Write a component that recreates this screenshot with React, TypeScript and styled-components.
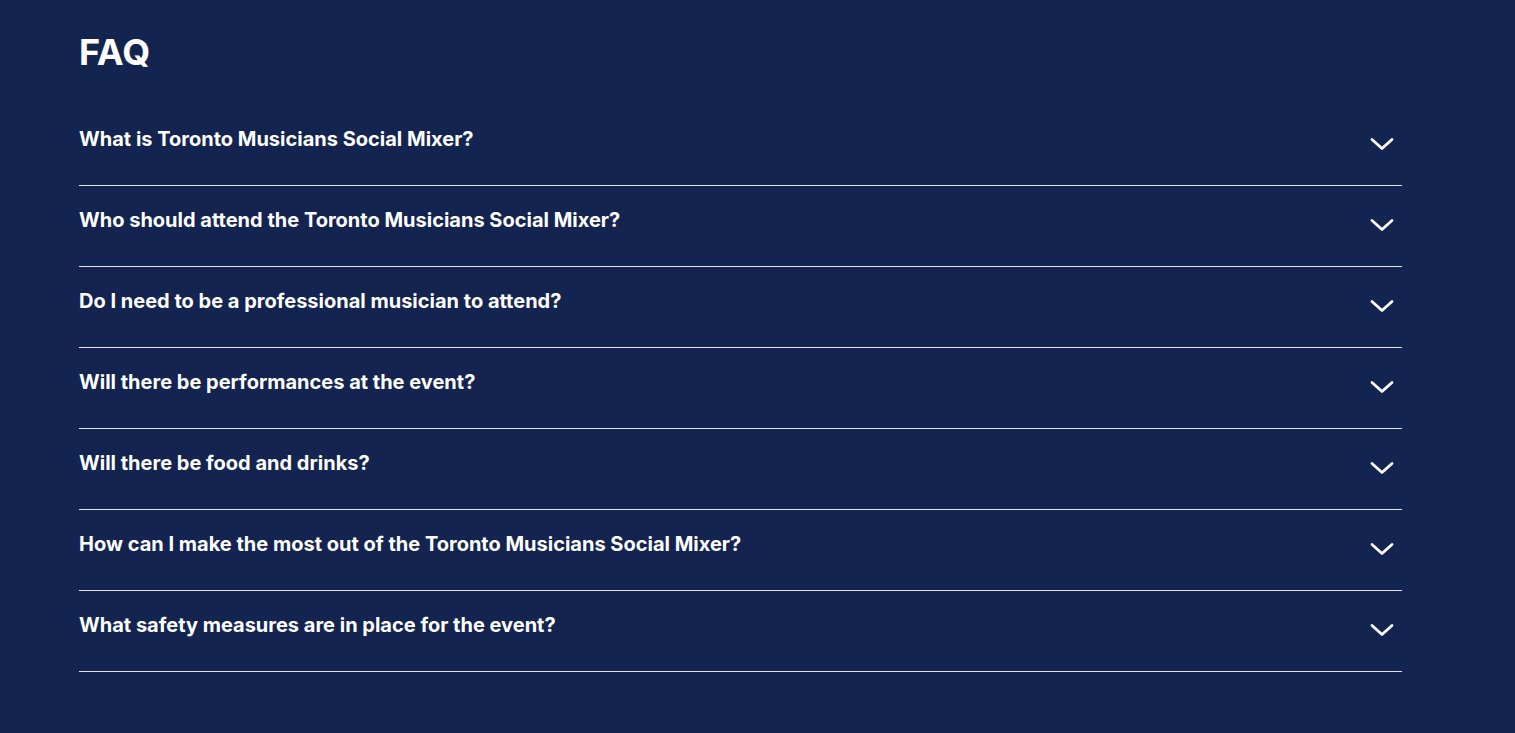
import React from "react";
import styled, { createGlobalStyle } from "styled-components";

const Global = createGlobalStyle`
  html, body { margin: 0; padding: 0; background: #132450; }
  body { font-family: Inter, "Noto Sans", sans-serif; color: #ffffff; }
`;

const Page = styled.main`
  min-height: 733px;
  background: #132450;
  padding: 28px 0 0 79px;
  box-sizing: border-box;
`;

const Section = styled.section`
  width: 1323px;
`;

const Title = styled.h2`
  margin: 0 0 29px;
  font-size: 36px;
  line-height: 48px;
  font-weight: 700;
`;

const List = styled.div`
  display: flex;
  flex-direction: column;
`;

const Row = styled.div`
  height: 81px;
  box-sizing: border-box;
  border-bottom: 1px solid rgba(255, 255, 255, 0.88);
  display: flex;
  align-items: flex-start;
  justify-content: space-between;
  padding: 24px 8px 0 0;
  cursor: pointer;
`;

const Question = styled.h3`
  margin: 0;
  font-size: 20px;
  line-height: 20px;
  font-weight: 700;
`;

const Chevron = styled.svg`
  flex: none;
  margin-top: 8px;
`;

const questions = [
  "What is Toronto Musicians Social Mixer?",
  "Who should attend the Toronto Musicians Social Mixer?",
  "Do I need to be a professional musician to attend?",
  "Will there be performances at the event?",
  "Will there be food and drinks?",
  "How can I make the most out of the Toronto Musicians Social Mixer?",
  "What safety measures are in place for the event?",
];

export default function App() {
  return (
    <>
      <Global />
      <Page>
        <Section>
          <Title>FAQ</Title>
          <List>
            {questions.map((q) => (
              <Row key={q}>
                <Question>{q}</Question>
                <Chevron width="24" height="14" viewBox="0 0 24 14" fill="none">
                  <path d="M2 2.5 L12 11.5 L22 2.5" stroke="#ffffff" strokeWidth="2.8" strokeLinecap="round" strokeLinejoin="round" />
                </Chevron>
              </Row>
            ))}
          </List>
        </Section>
      </Page>
    </>
  );
}
